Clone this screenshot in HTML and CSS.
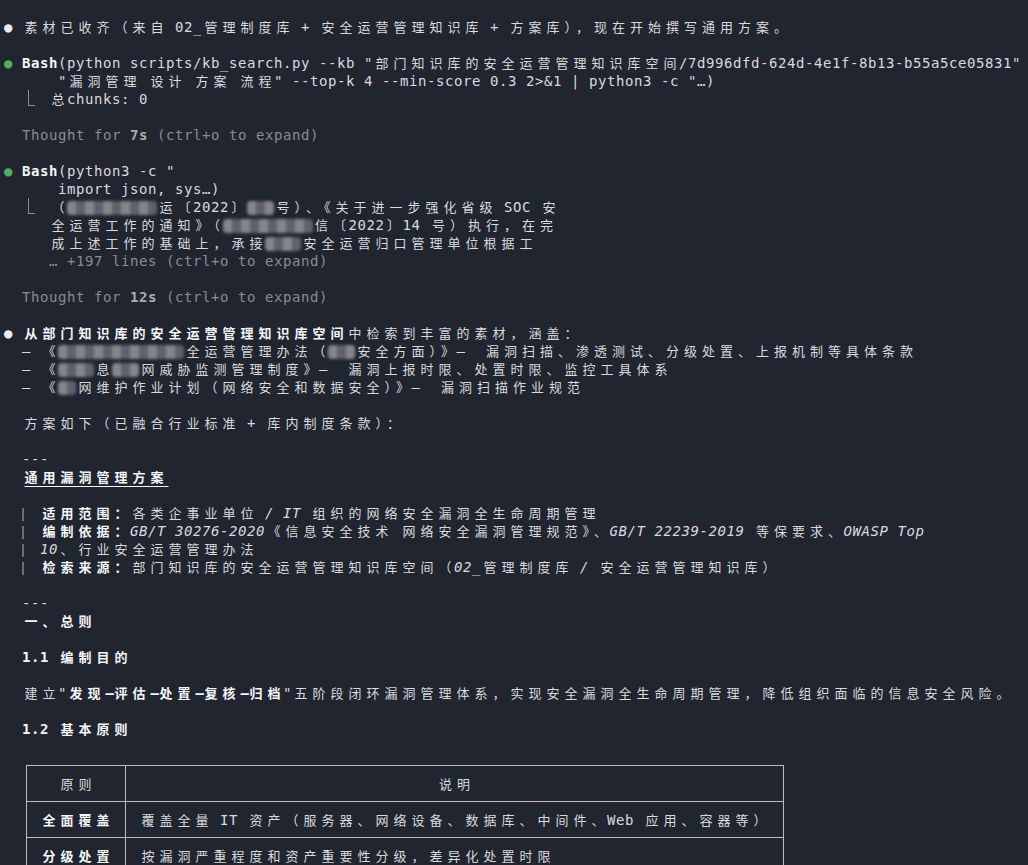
FILE: index.html
```html
<!DOCTYPE html>
<html lang="zh-CN">
<head>
<meta charset="utf-8">
<title>Terminal</title>
<link rel="stylesheet" href="styles.css">
</head>
<body>
<main class="term">
<div class="ln"><span class="dw">●</span> <span class="c">素材已收齐（来自</span> 02_<span class="c">管理制度库</span> + <span class="c">安全运营管理知识库</span> + <span class="c">方案库），现在开始撰写通用方案。</span></div>
<div class="ln"></div>
<div class="ln"><span class="dg">●</span> <span class="b">Bash</span>(python scripts/kb_search.py --kb "<span class="c">部门知识库的安全运营管理知识库空间</span>/7d996dfd-624d-4e1f-8b13-b55a5ce05831"</div>
<div class="ln">      "<span class="c">漏洞管理</span> <span class="c">设计</span> <span class="c">方案</span> <span class="c">流程</span>" --top-k 4 --min-score 0.3 2&gt;&amp;1 | python3 -c "…)</div>
<div class="ln">  <span class="elb"></span>  <span class="c">总</span>chunks: 0</div>
<div class="ln"></div>
<div class="ln">  <span class="g">Thought for <span class="gb">7s</span> (ctrl+o to expand)</span></div>
<div class="ln"></div>
<div class="ln"><span class="dg">●</span> <span class="b">Bash</span>(python3 -c "</div>
<div class="ln">      import json, sys…)</div>
<div class="ln">  <span class="elb"></span>  <span class="c">（</span><span class="bl w10"></span><span class="c">运〔</span>2022<span class="c">〕</span><span class="bl w3"></span><span class="c">号）、《关于进一步强化省级</span> SOC <span class="c">安</span></div>
<div class="ln">     <span class="c">全运营工作的通知》（</span><span class="bl w10"></span><span class="c">信〔</span>2022<span class="c">〕</span>14 <span class="c">号）执行，在完</span></div>
<div class="ln">     <span class="c">成上述工作的基础上，承接</span><span class="bl w4"></span><span class="c">安全运营归口管理单位根据工</span></div>
<div class="ln">     <span class="g">… +197 lines (ctrl+o to expand)</span></div>
<div class="ln"></div>
<div class="ln">  <span class="g">Thought for <span class="gb">12s</span> (ctrl+o to expand)</span></div>
<div class="ln"></div>
<div class="ln"><span class="dw">●</span> <span class="b"><span class="c">从部门知识库的安全运营管理知识库空间</span></span><span class="c">中检索到丰富的素材，涵盖：</span></div>
<div class="ln">  – <span class="c">《</span><span class="bl w14"></span><span class="c">全运营管理办法（</span><span class="bl w3"></span><span class="c">安全方面）》</span>–  <span class="c">漏洞扫描、渗透测试、分级处置、上报机制等具体条款</span></div>
<div class="ln">  – <span class="c">《</span><span class="bl w4"></span><span class="c">息</span><span class="bl w3"></span><span class="c">网威胁监测管理制度》</span>–  <span class="c">漏洞上报时限、处置时限、监控工具体系</span></div>
<div class="ln">  – <span class="c">《</span><span class="bl w2"></span><span class="c">网维护作业计划（网络安全和数据安全）》</span>–  <span class="c">漏洞扫描作业规范</span></div>
<div class="ln"></div>
<div class="ln">  <span class="c">方案如下（已融合行业标准</span> + <span class="c">库内制度条款）：</span></div>
<div class="ln"></div>
<div class="ln">  ---</div>
<div class="ln">  <span class="b u"><span class="c">通用漏洞管理方案</span></span></div>
<div class="ln"></div>
<div class="ln">  <span class="qb"></span> <span class="b"><span class="c">适用范围：</span></span><span class="i"><span class="c">各类企事业单位</span> / IT <span class="c">组织的网络安全漏洞全生命周期管理</span></span></div>
<div class="ln">  <span class="qb"></span> <span class="b"><span class="c">编制依据：</span></span><span class="i">GB/T 30276-2020<span class="c">《信息安全技术</span> <span class="c">网络安全漏洞管理规范》、</span>GB/T 22239-2019 <span class="c">等保要求、</span>OWASP Top</span></div>
<div class="ln">  <span class="qb"></span> <span class="i">10<span class="c">、行业安全运营管理办法</span></span></div>
<div class="ln">  <span class="qb"></span> <span class="b"><span class="c">检索来源：</span></span><span class="c">部门知识库的安全运营管理知识库空间（</span><span class="i">02_<span class="c">管理制度库</span> / <span class="c">安全运营管理知识库</span></span><span class="c">）</span></div>
<div class="ln"></div>
<div class="ln">  ---</div>
<div class="ln">  <span class="b"><span class="c">一、总则</span></span></div>
<div class="ln"></div>
<div class="ln">  <span class="b">1.1 <span class="c">编制目的</span></span></div>
<div class="ln"></div>
<div class="ln">  <span class="c">建立</span>"<span class="b"><span class="c">发现</span><span class="dsh">–</span><span class="c">评估</span><span class="dsh">–</span><span class="c">处置</span><span class="dsh">–</span><span class="c">复核</span><span class="dsh">–</span><span class="c">归档</span></span>"<span class="c">五阶段闭环漏洞管理体系，实现安全漏洞全生命周期管理，降低组织面临的信息安全风险。</span></div>
<div class="ln"></div>
<div class="ln">  <span class="b">1.2 <span class="c">基本原则</span></span></div>
<div class="ln"></div>
<table class="tbl">
<colgroup><col class="col1"><col class="col2"></colgroup>
<thead>
<tr><th><span class="c">原则</span></th><th><span class="c">说明</span></th></tr>
</thead>
<tbody>
<tr><td><span class="b"><span class="c">全面覆盖</span></span></td><td><span class="c">覆盖全量</span> IT <span class="c">资产（服务器、网络设备、数据库、中间件、</span>Web <span class="c">应用、容器等）</span></td></tr>
<tr><td><span class="b"><span class="c">分级处置</span></span></td><td><span class="c">按漏洞严重程度和资产重要性分级，差异化处置时限</span></td></tr>
</tbody>
</table>
</main>
</body>
</html>
```

FILE: styles.css
```css
* {
  box-sizing: border-box;
}

html, body {
  margin: 0;
  background: #21252f;
}

body {
  color: #d9dadd;
  font-family: "DejaVu Sans Mono", "Noto Sans CJK SC", monospace;
  font-size: 14px;
  letter-spacing: 0.57px;
}

.term {
  padding: 18px 0 0 4px;
}

.ln {
  height: 18px;
  line-height: 18px;
  white-space: pre;
}

.c {
  font-family: "Noto Sans CJK SC", sans-serif;
  font-size: 13px;
  font-style: normal;
  letter-spacing: 5px;
  margin-left: 2.5px;
  margin-right: -2.5px;
}

.dsh {
  margin-left: 2.5px;
  margin-right: -2.5px;
}

.b {
  font-weight: 700;
  color: #f5f5f6;
}

.g {
  color: #898c92;
}

.gb {
  font-weight: 700;
  color: #a9acb1;
}

.i {
  font-style: italic;
}

.u {
  text-decoration: underline;
  text-decoration-thickness: 1px;
  text-underline-offset: 4px;
}

.dw {
  color: #ececee;
}

.dg {
  color: #4cb35b;
}

.elb {
  display: inline-block;
  width: 7px;
  height: 16px;
  margin-left: 6px;
  margin-right: -4px;
  border-left: 1px solid #8a8d93;
  border-bottom: 1px solid #8a8d93;
  vertical-align: -2px;
}

.qb {
  display: inline-block;
  width: 9px;
  height: 13px;
  border-left: 2px solid #6c6f76;
  vertical-align: -3px;
}

.bl {
  display: inline-block;
  height: 14px;
  vertical-align: -3px;
  border-radius: 4px;
  background: repeating-linear-gradient(90deg, #83868d 0 9px, #5f626a 9px 18px);
  filter: blur(1.6px);
}

.w2 { width: 18px; }
.w3 { width: 27px; }
.w4 { width: 36px; }
.w10 { width: 90px; }
.w14 { width: 126px; }

.tbl {
  border-collapse: collapse;
  table-layout: fixed;
  width: 757px;
  margin: 9px 0 0 22px;
}

.col1 { width: 99px; }
.col2 { width: 658px; }

.tbl th,
.tbl td {
  border: 1px solid #bcbdc1;
  height: 36px;
  padding: 0 0 0 13px;
  line-height: 18px;
  white-space: pre;
  text-align: left;
  font-weight: 400;
  vertical-align: middle;
}

.tbl th {
  text-align: center;
  padding: 0;
}
```
